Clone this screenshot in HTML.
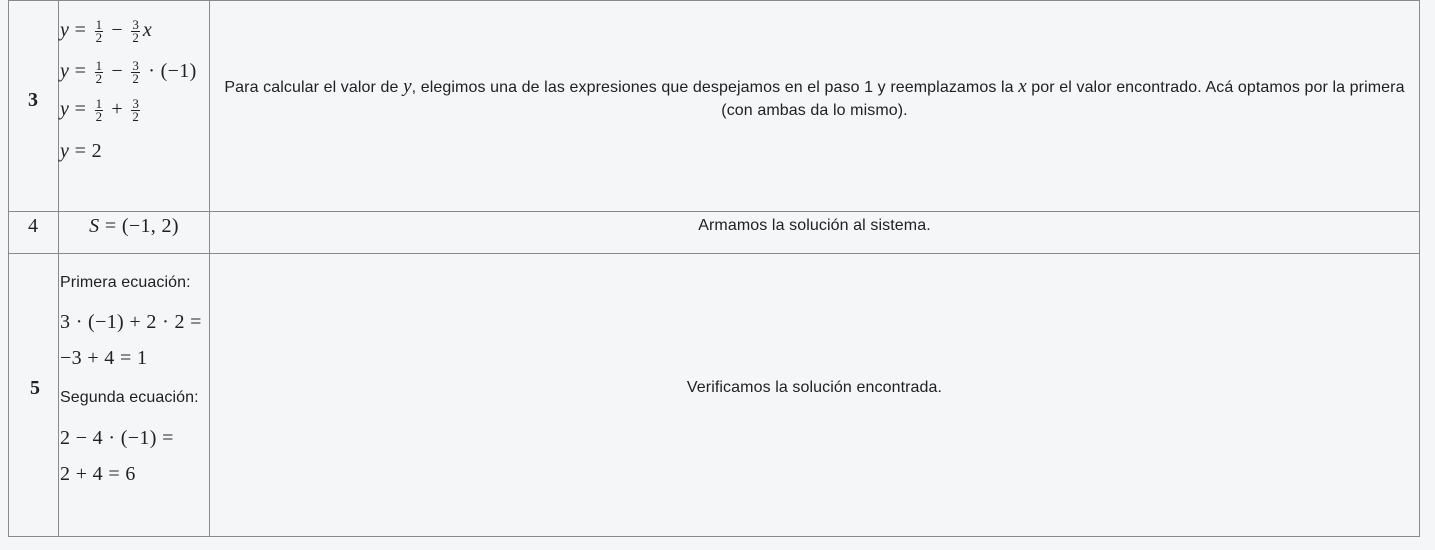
<!DOCTYPE html>
<html><head><meta charset="utf-8"><style>
body{margin:0;width:1435px;height:550px;background:#f5f6f8;position:relative;overflow:hidden;font-family:"Liberation Sans",sans-serif;color:#202122;}
.l{position:absolute;background:#8a8a8a}
.t{position:absolute;font-size:16px;white-space:nowrap;line-height:20px;letter-spacing:0.1px}
.m{position:absolute;font-family:"Liberation Serif",serif;font-size:20px;white-space:nowrap;line-height:22px;letter-spacing:0.35px}
.m i{font-style:italic}
.f{display:inline-block;vertical-align:middle;text-align:center;font-size:13px;line-height:12px;margin:0 3px;letter-spacing:0}
.f span{display:block}
.f span:first-child{border-bottom:1px solid #202122;padding:0 1px}
.c{text-align:center}
</style></head><body>
<div class="l" style="left:8px;top:0;width:1412px;height:1px"></div>
<div class="l" style="left:8px;top:211px;width:1412px;height:1px"></div>
<div class="l" style="left:8px;top:253px;width:1412px;height:1px"></div>
<div class="l" style="left:8px;top:536px;width:1412px;height:1px"></div>
<div class="l" style="left:8px;top:0;width:1px;height:537px"></div>
<div class="l" style="left:58px;top:0;width:1px;height:537px"></div>
<div class="l" style="left:209px;top:0;width:1px;height:537px"></div>
<div class="l" style="left:1419px;top:0;width:1px;height:537px"></div>

<div class="m" style="left:28px;top:89px;font-weight:bold">3</div>
<div class="m" style="left:60px;top:19px"><i>y</i> = <span class="f"><span>1</span><span>2</span></span> − <span class="f"><span>3</span><span>2</span></span><i>x</i></div>
<div class="m" style="left:60px;top:60px"><i>y</i> = <span class="f"><span>1</span><span>2</span></span> − <span class="f"><span>3</span><span>2</span></span> · (−1)</div>
<div class="m" style="left:60px;top:98px"><i>y</i> = <span class="f"><span>1</span><span>2</span></span> + <span class="f"><span>3</span><span>2</span></span></div>
<div class="m" style="left:60px;top:140px"><i>y</i> = 2</div>
<div class="t c" style="left:210px;width:1209px;top:77px;white-space:normal">Para calcular el valor de <i style="font-family:'Liberation Serif',serif;font-size:19px">y</i>, elegimos una de las expresiones que despejamos en el paso 1 y reemplazamos la <i style="font-family:'Liberation Serif',serif;font-size:19px">x</i> por el valor encontrado. Acá optamos por la primera<br><span style="line-height:26px">(con ambas da lo mismo).</span></div>

<div class="m" style="left:28px;top:215px">4</div>
<div class="m c" style="left:59px;width:150px;top:215px"><i>S</i> = (−1, 2)</div>
<div class="t c" style="left:210px;width:1209px;top:216px">Armamos la solución al sistema.</div>

<div class="m" style="left:30px;top:377px;font-weight:bold">5</div>
<div class="t" style="left:60px;top:273px">Primera ecuación:</div>
<div class="m" style="left:60px;top:311px">3 · (−1) + 2 · 2 =</div>
<div class="m" style="left:60px;top:347px">−3 + 4 = 1</div>
<div class="t" style="left:60px;top:388px">Segunda ecuación:</div>
<div class="m" style="left:60px;top:427px">2 − 4 · (−1) =</div>
<div class="m" style="left:60px;top:463px">2 + 4 = 6</div>
<div class="t c" style="left:210px;width:1209px;top:378px">Verificamos la solución encontrada.</div>
</body></html>
